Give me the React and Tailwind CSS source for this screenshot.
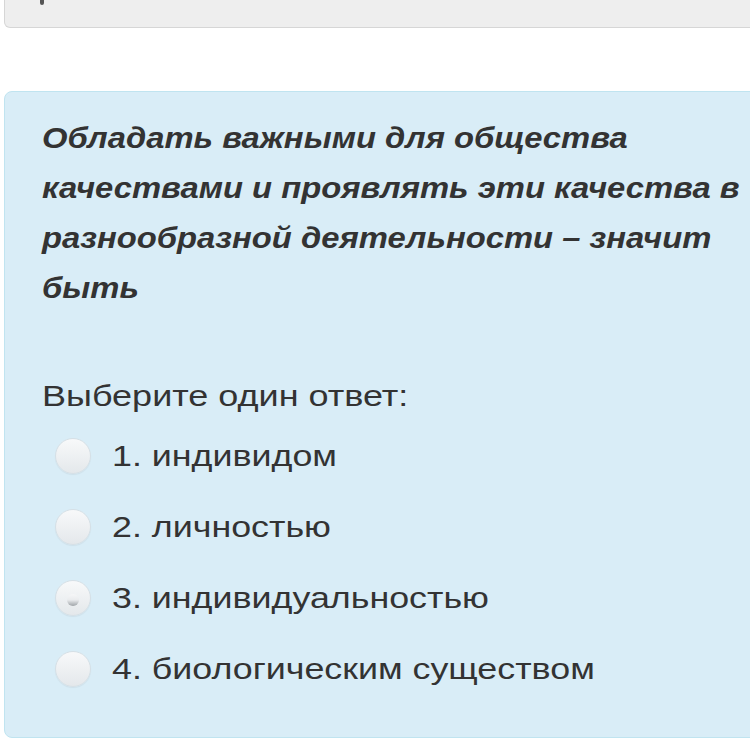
import React from 'react';

const options = [
  { id: 1, label: '1. индивидом' },
  { id: 2, label: '2. личностью' },
  { id: 3, label: '3. индивидуальностью', checked: true },
  { id: 4, label: '4. биологическим существом' },
];

const Radio = ({ checked }) => (
  <span className="relative flex h-[36px] w-[36px] shrink-0 items-center justify-center rounded-full border border-[#d6e0e6] bg-gradient-to-b from-[#f8f9fa] to-[#e4e8eb] shadow-[0_1px_1px_rgba(0,0,0,0.05)]">
    {checked && (
      <span className="mt-[3px] h-[12px] w-[12px] rounded-full bg-gradient-to-b from-[#f6f7f8] via-[#e9ebed] to-[#9fa4a8]" />
    )}
  </span>
);

const App = () => {
  return (
    <div className="h-[750px] w-[750px] overflow-hidden bg-white font-['Liberation_Sans',Arial,sans-serif] text-[#333]">
      {/* bottom of the previous block */}
      <div className="relative ml-[4px] h-[28px] w-[760px] rounded-b-md border border-t-0 border-[#d6d6d6] bg-[#eeeeee]">
        <span className="absolute left-[35px] top-0 h-[5px] w-[4px] rounded-b-full bg-[#555]" />
      </div>

      <div className="mt-[63px] ml-[4px] h-[647px] w-[760px] rounded-lg border border-[#c0e4f0] bg-[#d9edf7] pl-[37px] pt-[21px]">
        <h2 className="w-[636px] origin-left scale-x-[1.13] text-[29px] font-bold italic leading-[50px] text-[#333]">
          Обладать важными для общества качествами и проявлять эти качества в разнообразной деятельности – значит быть
        </h2>

        <p className="mt-[63px] origin-left scale-x-[1.2] text-[30px] leading-[40px]">Выберите один ответ:</p>

        <div className="mt-[22px] flex flex-col gap-[35px] pl-[13px]">
          {options.map((o) => (
            <label key={o.id} className="flex h-[36px] items-center gap-[21px]">
              <Radio checked={o.checked} />
              <span className="origin-left scale-x-[1.235] text-[29px] leading-[36px] text-[#333]">{o.label}</span>
            </label>
          ))}
        </div>
      </div>
    </div>
  );
};

export default App;
